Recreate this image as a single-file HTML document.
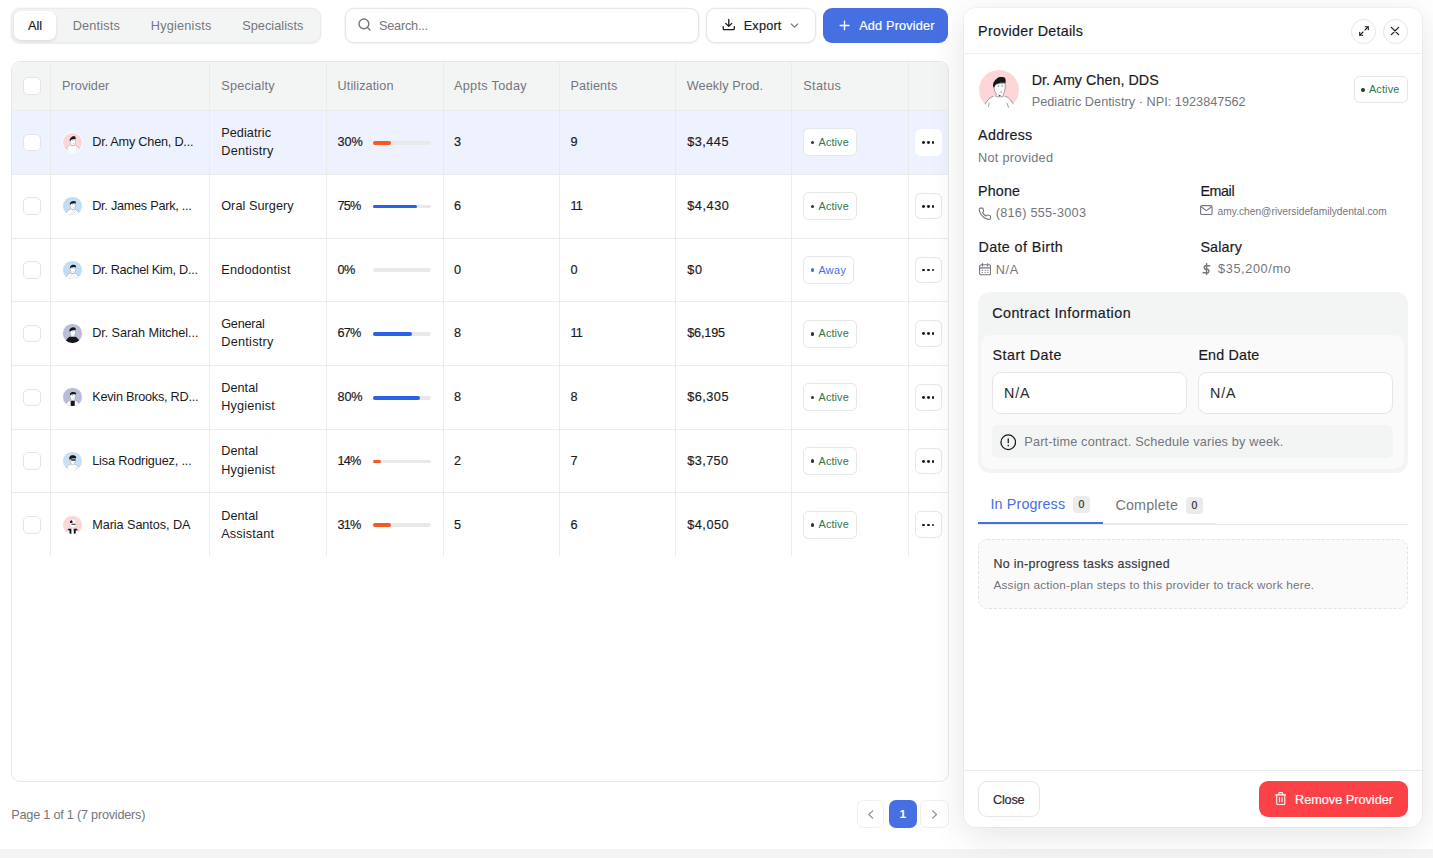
<!DOCTYPE html>
<html lang="en">
<head>
<meta charset="utf-8">
<title>Providers</title>
<style>
*{box-sizing:border-box;margin:0;padding:0}
html,body{width:1433px;height:858px;overflow:hidden;background:#fff}
body{font-family:"Liberation Sans",Arial,sans-serif;font-size:12.7px;color:#1b1b1f;position:relative}
.abs{position:absolute}
.t{line-height:1;white-space:pre}
.med{-webkit-text-stroke:0.18px currentColor}
</style>
</head>
<body>
<div class="abs" style="left:0.0px;top:849.4px;width:1433.0px;height:9.0px;background:#f4f4f5"></div>
<div class="abs" style="left:10.8px;top:7.7px;width:310.0px;height:35.0px;background:#f3f5f4;border:1px solid #ebebeb;border-radius:9px;box-shadow:0 1px 2px rgba(0,0,0,.05),0 0 0 1px rgba(0,0,0,.02);"></div>
<div class="abs" style="left:14.0px;top:11.3px;width:42.3px;height:28.8px;background:#fff;border-radius:7px;box-shadow:0 1px 3px rgba(0,0,0,.13)"></div>
<span class="abs t med" style="left:28.1px;top:19.9px;font-size:12.7px;color:#1b1b1f;letter-spacing:-0.124px">All</span>
<span class="abs t" style="left:72.7px;top:19.9px;font-size:12.7px;color:#75757d;letter-spacing:0.181px">Dentists</span>
<span class="abs t" style="left:150.8px;top:19.9px;font-size:12.7px;color:#75757d;letter-spacing:0.218px">Hygienists</span>
<span class="abs t" style="left:242.2px;top:19.9px;font-size:12.7px;color:#75757d;letter-spacing:0.061px">Specialists</span>
<div class="abs" style="left:345.2px;top:7.7px;width:353.6px;height:35.0px;background:#fff;border:1px solid #e6e6e6;border-radius:9px;box-shadow:0 1px 2px rgba(0,0,0,.05),0 0 0 1px rgba(0,0,0,.02);"></div>
<svg class="abs" style="left:357.5px;top:18.4px" width="13" height="13" viewBox="0 0 13 13" fill="none" stroke="#75757d" stroke-width="1.400" stroke-linecap="round"><circle cx="5.900" cy="5.900" r="4.900"/><path d="M9.500 9.500 12 12"/></svg>
<span class="abs t" style="left:378.9px;top:19.9px;font-size:12.7px;color:#75757d;letter-spacing:-0.186px">Search...</span>
<div class="abs" style="left:706.3px;top:7.7px;width:109.4px;height:35.0px;background:#fff;border:1px solid #e6e6e6;border-radius:9px;box-shadow:0 1px 2px rgba(0,0,0,.05),0 0 0 1px rgba(0,0,0,.02);"></div>
<svg class="abs" style="left:722.0px;top:18.3px" width="13.5" height="13.5" viewBox="0 0 13.500 13.500" fill="none" stroke="#1b1b1f" stroke-width="1.300" stroke-linecap="round" stroke-linejoin="round"><path d="M6.750 1.400v6.800M3.700 5.400 6.750 8.400 9.800 5.400M1.200 8.700v1.700c0 .7.500 1.200 1.200 1.200h8.700c.7 0 1.200-.5 1.200-1.200V8.700"/></svg>
<span class="abs t med" style="left:743.7px;top:19.9px;font-size:12.7px;color:#1b1b1f;letter-spacing:0.205px">Export</span>
<svg class="abs" style="left:789.9px;top:20.6px" width="9" height="9" viewBox="0 0 9 9" fill="none" stroke="#75757d" stroke-width="1.100" stroke-linecap="round" stroke-linejoin="round"><path d="M1.300 3 4.500 6.100 7.700 3"/></svg>
<div class="abs" style="left:823.2px;top:8.0px;width:125.3px;height:34.5px;background:#4670e2;border-radius:9px"></div>
<svg class="abs" style="left:838.6px;top:19.9px" width="11" height="11" viewBox="0 0 11 11" fill="none" stroke="#fff" stroke-width="1.400" stroke-linecap="round"><path d="M5.500 1.200v8.600M1.200 5.500h8.600"/></svg>
<span class="abs t med" style="left:859.2px;top:19.9px;font-size:12.7px;color:#fff;letter-spacing:0.179px">Add Provider</span>
<div class="abs" style="left:11px;top:60.5px;width:938px;height:721px;border:1px solid #e8e8e8;border-radius:9px;overflow:hidden;background:#fff">
<div class="abs" style="left:0.0px;top:0.0px;width:936.0px;height:48.8px;background:#f3f5f4"></div>
<div class="abs" style="left:0.0px;top:48.8px;width:936.0px;height:63.7px;background:#eef2fe"></div>
<div class="abs" style="left:0.0px;top:48.7px;width:936.0px;height:1.0px;background:#ebebeb"></div>
<div class="abs" style="left:0.0px;top:112.4px;width:936.0px;height:1.0px;background:#ebebeb"></div>
<div class="abs" style="left:0.0px;top:176.1px;width:936.0px;height:1.0px;background:#ebebeb"></div>
<div class="abs" style="left:0.0px;top:239.8px;width:936.0px;height:1.0px;background:#ebebeb"></div>
<div class="abs" style="left:0.0px;top:303.5px;width:936.0px;height:1.0px;background:#ebebeb"></div>
<div class="abs" style="left:0.0px;top:367.2px;width:936.0px;height:1.0px;background:#ebebeb"></div>
<div class="abs" style="left:0.0px;top:430.9px;width:936.0px;height:1.0px;background:#ebebeb"></div>
<div class="abs" style="left:38.3px;top:0.0px;width:1.0px;height:494.7px;background:#ebebeb"></div>
<div class="abs" style="left:197.3px;top:0.0px;width:1.0px;height:494.7px;background:#ebebeb"></div>
<div class="abs" style="left:314.3px;top:0.0px;width:1.0px;height:494.7px;background:#ebebeb"></div>
<div class="abs" style="left:430.5px;top:0.0px;width:1.0px;height:494.7px;background:#ebebeb"></div>
<div class="abs" style="left:546.9px;top:0.0px;width:1.0px;height:494.7px;background:#ebebeb"></div>
<div class="abs" style="left:663.2px;top:0.0px;width:1.0px;height:494.7px;background:#ebebeb"></div>
<div class="abs" style="left:779.4px;top:0.0px;width:1.0px;height:494.7px;background:#ebebeb"></div>
<div class="abs" style="left:896.4px;top:0.0px;width:1.0px;height:494.7px;background:#ebebeb"></div>
<div class="abs" style="left:11.0px;top:15.8px;width:17.6px;height:17.6px;border:1px solid #e4e4e7;border-radius:5px;background:#fff"></div>
<span class="abs t" style="left:50.0px;top:18.8px;font-size:12.7px;color:#75757d;letter-spacing:-0.007px">Provider</span>
<span class="abs t" style="left:209.2px;top:18.8px;font-size:12.7px;color:#75757d;letter-spacing:0.249px">Specialty</span>
<span class="abs t" style="left:325.6px;top:18.8px;font-size:12.7px;color:#75757d;letter-spacing:0.086px">Utilization</span>
<span class="abs t" style="left:441.9px;top:18.8px;font-size:12.7px;color:#75757d;letter-spacing:0.323px">Appts Today</span>
<span class="abs t" style="left:558.5px;top:18.8px;font-size:12.7px;color:#75757d;letter-spacing:0.141px">Patients</span>
<span class="abs t" style="left:674.7px;top:18.8px;font-size:12.7px;color:#75757d;letter-spacing:0.103px">Weekly Prod.</span>
<span class="abs t" style="left:791.3px;top:18.8px;font-size:12.7px;color:#75757d;letter-spacing:0.333px">Status</span>
<div class="abs" style="left:11.0px;top:72.2px;width:17.6px;height:17.6px;border:1px solid #e4e4e7;border-radius:5px;background:#fff"></div>
<div class="abs" style="left:50.3px;top:70.8px;width:20.400px;height:20.400px;border-radius:50%;border:.6px solid #fff;background:#fdd6da;overflow:hidden"><svg class="abs" style="left:0;top:0" width="19.200" height="19.200" viewBox="0 0 40 40"><path d="M0 40V37L5.500 35C8 30 11 26.800 14.500 26H25.500C29 26.800 32 30 34.500 35L40 37V40z" fill="#fff"/><path d="M5.500 35C8 30 11 26.800 14.500 26M25.500 26C29 26.800 32 30 34.500 35" fill="none" stroke="#555" stroke-width=".55"/><path d="M10 32.500 9.300 37.500M27.600 32.500 29.600 38" fill="none" stroke="#666" stroke-width=".6"/><path d="M14.900 14C14.800 18 15.300 21.500 17 23.600V26.500H24V24C25.800 21.500 26.300 17 25.900 13z" fill="#fff" stroke="#444" stroke-width=".45"/><path d="M18.600 15.900h1.500M22.200 15.700h1.400M21.300 21.800h1.300" fill="none" stroke="#333" stroke-width=".7"/><path d="M19 24.300 21.800 25.600 20.500 26.300z" fill="#222"/><path d="M14.800 17.500C12.800 15 14 10.800 19.300 7.200 22 6.500 25 6.900 25.800 7.600 26.600 9.500 26.600 11.500 26.100 13.200 23 12.200 19.500 12.800 17 14.200 16 15.300 15.300 16.500 14.800 17.500z" fill="#18181a"/></svg></div>
<span class="abs t" style="left:80.2px;top:74.6px;font-size:12.7px;color:#1b1b1f;letter-spacing:-0.221px">Dr. Amy Chen, D...</span>
<span class="abs t" style="left:209.2px;top:65.4px;font-size:12.7px;color:#1b1b1f;letter-spacing:0.062px">Pediatric</span>
<span class="abs t" style="left:209.2px;top:83.8px;font-size:12.7px;color:#1b1b1f;letter-spacing:0.275px">Dentistry</span>
<span class="abs t med" style="left:325.5px;top:74.6px;font-size:12.7px;color:#1b1b1f;letter-spacing:-0.003px">30%</span>
<div class="abs" style="left:361.0px;top:79.4px;width:58.3px;height:3.8px;background:#e9e9e9;border-radius:2px"></div>
<div class="abs" style="left:361.0px;top:79.4px;width:17.7px;height:3.8px;background:#f55a24;border-radius:2px"></div>
<span class="abs t med" style="left:441.9px;top:74.6px;font-size:12.7px;color:#1b1b1f;letter-spacing:0.138px">3</span>
<span class="abs t med" style="left:558.5px;top:74.6px;font-size:12.7px;color:#1b1b1f;letter-spacing:0.138px">9</span>
<span class="abs t med" style="left:675.2px;top:74.6px;font-size:12.7px;color:#1b1b1f;letter-spacing:0.489px">$3,445</span>
<div class="abs" style="left:790.9px;top:66.9px;width:53.8px;height:28.0px;border:1px solid #e6e6e6;border-radius:5.500px;background:#fff"></div>
<div class="abs" style="left:798.6px;top:79.3px;width:3.6px;height:3.6px;background:#1f3d2c;border-radius:50%"></div>
<span class="abs t" style="left:806.5px;top:75.7px;font-size:10.9px;color:#2f774b;letter-spacing:0.114px">Active</span>
<div class="abs" style="left:903.0px;top:67.7px;width:26.6px;height:26.6px;border:1px solid #fff;border-radius:5.500px;background:#fff"></div>
<div class="abs" style="left:910.2px;top:79.8px;width:2.9px;height:2.9px;background:#1b1b1f;border-radius:50%"></div>
<div class="abs" style="left:914.9px;top:79.8px;width:2.9px;height:2.9px;background:#1b1b1f;border-radius:50%"></div>
<div class="abs" style="left:919.6px;top:79.8px;width:2.9px;height:2.9px;background:#1b1b1f;border-radius:50%"></div>
<div class="abs" style="left:11.0px;top:135.9px;width:17.6px;height:17.6px;border:1px solid #e4e4e7;border-radius:5px;background:#fff"></div>
<div class="abs" style="left:50.3px;top:134.4px;width:20.400px;height:20.400px;border-radius:50%;border:.6px solid #fff;background:#c3dcf4;overflow:hidden"><svg class="abs" style="left:0;top:0" width="19.200" height="19.200" viewBox="0 0 40 40"><path d="M0 40V37L5.500 35C8 30 11 26.800 14.500 26H25.500C29 26.800 32 30 34.500 35L40 37V40z" fill="#fff"/><path d="M5.500 35C8 30 11 26.800 14.500 26M25.500 26C29 26.800 32 30 34.500 35" fill="none" stroke="#555" stroke-width=".55"/><path d="M14.900 14C14.800 18 15.300 21.500 17 23.600V26.500H24V24C25.800 21.500 26.300 17 25.900 13z" fill="#fff" stroke="#444" stroke-width=".45"/><path d="M18.600 15.900h1.500M22.200 15.700h1.400M21.300 21.800h1.300" fill="none" stroke="#333" stroke-width=".7"/><path d="M19 24.300 21.800 25.600 20.500 26.300z" fill="#222"/><path d="M15 16.800C13.300 14.500 14.500 11.500 17.500 9.300 20.500 7.600 24.500 7.800 26.800 10 27.300 11.500 26.800 12.800 26.200 13.600 23 12.300 19.500 12.900 17 14.300 16 15.200 15.400 16 15 16.800z" fill="#18181a"/><path d="M14 37 24.500 28M17 39 26 30.500" fill="none" stroke="#999" stroke-width=".7"/></svg></div>
<span class="abs t" style="left:80.2px;top:138.3px;font-size:12.7px;color:#1b1b1f;letter-spacing:-0.262px">Dr. James Park, ...</span>
<span class="abs t" style="left:209.2px;top:138.3px;font-size:12.7px;color:#1b1b1f;letter-spacing:0.050px">Oral Surgery</span>
<span class="abs t med" style="left:325.5px;top:138.3px;font-size:12.7px;color:#1b1b1f;letter-spacing:-0.750px">75%</span>
<div class="abs" style="left:361.0px;top:143.1px;width:58.3px;height:3.8px;background:#e9e9e9;border-radius:2px"></div>
<div class="abs" style="left:361.0px;top:143.1px;width:43.9px;height:3.8px;background:#2962e8;border-radius:2px"></div>
<span class="abs t med" style="left:441.9px;top:138.3px;font-size:12.7px;color:#1b1b1f;letter-spacing:0.138px">6</span>
<span class="abs t med" style="left:558.5px;top:138.3px;font-size:12.7px;color:#1b1b1f;letter-spacing:-0.750px">11</span>
<span class="abs t med" style="left:675.2px;top:138.3px;font-size:12.7px;color:#1b1b1f;letter-spacing:0.561px">$4,430</span>
<div class="abs" style="left:790.9px;top:130.6px;width:53.8px;height:28.0px;border:1px solid #e6e6e6;border-radius:5.500px;background:#fff"></div>
<div class="abs" style="left:798.6px;top:143.0px;width:3.6px;height:3.6px;background:#1f3d2c;border-radius:50%"></div>
<span class="abs t" style="left:806.5px;top:139.4px;font-size:10.9px;color:#2f774b;letter-spacing:0.114px">Active</span>
<div class="abs" style="left:903.0px;top:131.3px;width:26.6px;height:26.6px;border:1px solid #e6e6e6;border-radius:5.500px;background:#fff"></div>
<div class="abs" style="left:910.2px;top:143.4px;width:2.9px;height:2.9px;background:#1b1b1f;border-radius:50%"></div>
<div class="abs" style="left:914.9px;top:143.4px;width:2.9px;height:2.9px;background:#1b1b1f;border-radius:50%"></div>
<div class="abs" style="left:919.6px;top:143.4px;width:2.9px;height:2.9px;background:#1b1b1f;border-radius:50%"></div>
<div class="abs" style="left:11.0px;top:199.6px;width:17.6px;height:17.6px;border:1px solid #e4e4e7;border-radius:5px;background:#fff"></div>
<div class="abs" style="left:50.3px;top:198.1px;width:20.400px;height:20.400px;border-radius:50%;border:.6px solid #fff;background:#c3dcf4;overflow:hidden"><svg class="abs" style="left:0;top:0" width="19.200" height="19.200" viewBox="0 0 40 40"><path d="M0 40V37L5.500 35C8 30 11 26.800 14.500 26H25.500C29 26.800 32 30 34.500 35L40 37V40z" fill="#fff"/><path d="M5.500 35C8 30 11 26.800 14.500 26M25.500 26C29 26.800 32 30 34.500 35" fill="none" stroke="#555" stroke-width=".55"/><path d="M14.900 14C14.800 18 15.300 21.500 17 23.600V26.500H24V24C25.800 21.500 26.300 17 25.900 13z" fill="#fff" stroke="#444" stroke-width=".45"/><path d="M18.600 15.900h1.500M22.200 15.700h1.400M21.300 21.800h1.300" fill="none" stroke="#333" stroke-width=".7"/><path d="M19 24.300 21.800 25.600 20.500 26.300z" fill="#222"/><path d="M15 15.800C13.800 13 15.500 9.800 18.500 8.300 21.500 7.200 25 7.900 27 10 27.400 11.500 27 12.800 26.300 13.600 23 12.100 19.500 12.500 17 13.800 16 14.500 15.400 15.200 15 15.800z" fill="#18181a"/><path d="M12 31l2 2M17 29l2 2M22 30l2 2M14 35l2 2M20 34l2 2M26 33l2 2" fill="none" stroke="#777" stroke-width=".7"/></svg></div>
<span class="abs t" style="left:80.2px;top:202.0px;font-size:12.7px;color:#1b1b1f;letter-spacing:-0.298px">Dr. Rachel Kim, D...</span>
<span class="abs t" style="left:209.2px;top:202.0px;font-size:12.7px;color:#1b1b1f;letter-spacing:0.227px">Endodontist</span>
<span class="abs t med" style="left:325.5px;top:202.0px;font-size:12.7px;color:#1b1b1f;letter-spacing:-0.629px">0%</span>
<div class="abs" style="left:361.0px;top:206.9px;width:58.3px;height:3.8px;background:#e9e9e9;border-radius:2px"></div>
<span class="abs t med" style="left:441.9px;top:202.0px;font-size:12.7px;color:#1b1b1f;letter-spacing:0.138px">0</span>
<span class="abs t med" style="left:558.5px;top:202.0px;font-size:12.7px;color:#1b1b1f;letter-spacing:0.138px">0</span>
<span class="abs t med" style="left:675.2px;top:202.0px;font-size:12.7px;color:#1b1b1f;letter-spacing:0.650px">$0</span>
<div class="abs" style="left:790.9px;top:194.3px;width:50.8px;height:28.0px;border:1px solid #e6e6e6;border-radius:5.500px;background:#fff"></div>
<div class="abs" style="left:798.6px;top:206.8px;width:3.6px;height:3.6px;background:#4670e2;border-radius:50%"></div>
<span class="abs t" style="left:806.5px;top:203.1px;font-size:10.9px;color:#4670e2;letter-spacing:0.304px">Away</span>
<div class="abs" style="left:903.0px;top:195.1px;width:26.6px;height:26.6px;border:1px solid #e6e6e6;border-radius:5.500px;background:#fff"></div>
<div class="abs" style="left:910.2px;top:207.1px;width:2.9px;height:2.9px;background:#1b1b1f;border-radius:50%"></div>
<div class="abs" style="left:914.9px;top:207.1px;width:2.9px;height:2.9px;background:#1b1b1f;border-radius:50%"></div>
<div class="abs" style="left:919.6px;top:207.1px;width:2.9px;height:2.9px;background:#1b1b1f;border-radius:50%"></div>
<div class="abs" style="left:11.0px;top:263.4px;width:17.6px;height:17.6px;border:1px solid #e4e4e7;border-radius:5px;background:#fff"></div>
<div class="abs" style="left:50.3px;top:261.9px;width:20.400px;height:20.400px;border-radius:50%;border:.6px solid #fff;background:#babdd7;overflow:hidden"><svg class="abs" style="left:0;top:0" width="19.200" height="19.200" viewBox="0 0 40 40"><path d="M0 40V38L6.500 35C8.500 30.500 11 27.500 14.500 26.500H25.500C29 27.500 31.500 30.500 33.500 35L40 38V40z" fill="#16161a"/><path d="M14.900 14C14.800 18 15.300 21.500 17 23.600V26.500H24V24C25.800 21.500 26.300 17 25.900 13z" fill="#fff" stroke="#444" stroke-width=".45"/><path d="M18.600 15.900h1.500M22.200 15.700h1.400M21.300 21.800h1.300" fill="none" stroke="#333" stroke-width=".7"/><path d="M19 24.300 21.800 25.600 20.500 26.300z" fill="#222"/><path d="M14.500 16C12.200 14 13 10.500 16.500 8.300 19.500 6.200 24 6.300 26 8.500 26.800 10.500 26.500 12.200 26 13.200 23 12.200 19.500 12.800 17 14.200 15.800 14.800 15 15.400 14.500 16z" fill="#16161a"/></svg></div>
<span class="abs t" style="left:80.2px;top:265.7px;font-size:12.7px;color:#1b1b1f;letter-spacing:-0.087px">Dr. Sarah Mitchel...</span>
<span class="abs t" style="left:209.2px;top:256.5px;font-size:12.7px;color:#1b1b1f;letter-spacing:-0.237px">General</span>
<span class="abs t" style="left:209.2px;top:274.9px;font-size:12.7px;color:#1b1b1f;letter-spacing:0.275px">Dentistry</span>
<span class="abs t med" style="left:325.5px;top:265.7px;font-size:12.7px;color:#1b1b1f;letter-spacing:-0.750px">67%</span>
<div class="abs" style="left:361.0px;top:270.6px;width:58.3px;height:3.8px;background:#e9e9e9;border-radius:2px"></div>
<div class="abs" style="left:361.0px;top:270.6px;width:39.3px;height:3.8px;background:#2962e8;border-radius:2px"></div>
<span class="abs t med" style="left:441.9px;top:265.7px;font-size:12.7px;color:#1b1b1f;letter-spacing:0.138px">8</span>
<span class="abs t med" style="left:558.5px;top:265.7px;font-size:12.7px;color:#1b1b1f;letter-spacing:-0.750px">11</span>
<span class="abs t med" style="left:675.2px;top:265.7px;font-size:12.7px;color:#1b1b1f;letter-spacing:-0.166px">$6,195</span>
<div class="abs" style="left:790.9px;top:258.1px;width:53.8px;height:28.0px;border:1px solid #e6e6e6;border-radius:5.500px;background:#fff"></div>
<div class="abs" style="left:798.6px;top:270.5px;width:3.6px;height:3.6px;background:#1f3d2c;border-radius:50%"></div>
<span class="abs t" style="left:806.5px;top:266.8px;font-size:10.9px;color:#2f774b;letter-spacing:0.114px">Active</span>
<div class="abs" style="left:903.0px;top:258.8px;width:26.6px;height:26.6px;border:1px solid #e6e6e6;border-radius:5.500px;background:#fff"></div>
<div class="abs" style="left:910.2px;top:270.9px;width:2.9px;height:2.9px;background:#1b1b1f;border-radius:50%"></div>
<div class="abs" style="left:914.9px;top:270.9px;width:2.9px;height:2.9px;background:#1b1b1f;border-radius:50%"></div>
<div class="abs" style="left:919.6px;top:270.9px;width:2.9px;height:2.9px;background:#1b1b1f;border-radius:50%"></div>
<div class="abs" style="left:11.0px;top:327.1px;width:17.6px;height:17.6px;border:1px solid #e4e4e7;border-radius:5px;background:#fff"></div>
<div class="abs" style="left:50.3px;top:325.6px;width:20.400px;height:20.400px;border-radius:50%;border:.6px solid #fff;background:#babdd7;overflow:hidden"><svg class="abs" style="left:0;top:0" width="19.200" height="19.200" viewBox="0 0 40 40"><path d="M0 40V37L5.500 35C8 30 11 26.800 14.500 26H25.500C29 26.800 32 30 34.500 35L40 37V40z" fill="#fff"/><path d="M5.500 35C8 30 11 26.800 14.500 26M25.500 26C29 26.800 32 30 34.500 35" fill="none" stroke="#555" stroke-width=".55"/><path d="M16 26.500H24.500V40H16z" fill="#16161a"/><path d="M14.900 14C14.800 18 15.300 21.500 17 23.600V26.500H24V24C25.800 21.500 26.300 17 25.900 13z" fill="#fff" stroke="#444" stroke-width=".45"/><path d="M18.600 15.900h1.500M22.200 15.700h1.400M21.300 21.800h1.300" fill="none" stroke="#333" stroke-width=".7"/><path d="M19 24.300 21.800 25.600 20.500 26.300z" fill="#222"/><path d="M15 15.500C13.500 13 15 10 18 8.900 21.500 7.800 25.500 8.300 27.500 10.300 27.800 11.800 27.300 13 26.500 13.600 23 12.300 19.500 12.600 17 13.800 16 14.300 15.400 14.900 15 15.500z" fill="#16161a"/></svg></div>
<span class="abs t" style="left:80.2px;top:329.4px;font-size:12.7px;color:#1b1b1f;letter-spacing:-0.243px">Kevin Brooks, RD...</span>
<span class="abs t" style="left:209.2px;top:320.2px;font-size:12.7px;color:#1b1b1f;letter-spacing:0.039px">Dental</span>
<span class="abs t" style="left:209.2px;top:338.6px;font-size:12.7px;color:#1b1b1f;letter-spacing:0.166px">Hygienist</span>
<span class="abs t med" style="left:325.5px;top:329.4px;font-size:12.7px;color:#1b1b1f;letter-spacing:-0.122px">80%</span>
<div class="abs" style="left:361.0px;top:334.3px;width:58.3px;height:3.8px;background:#e9e9e9;border-radius:2px"></div>
<div class="abs" style="left:361.0px;top:334.3px;width:46.8px;height:3.8px;background:#2962e8;border-radius:2px"></div>
<span class="abs t med" style="left:441.9px;top:329.4px;font-size:12.7px;color:#1b1b1f;letter-spacing:0.138px">8</span>
<span class="abs t med" style="left:558.5px;top:329.4px;font-size:12.7px;color:#1b1b1f;letter-spacing:0.138px">8</span>
<span class="abs t med" style="left:675.2px;top:329.4px;font-size:12.7px;color:#1b1b1f;letter-spacing:0.489px">$6,305</span>
<div class="abs" style="left:790.9px;top:321.8px;width:53.8px;height:28.0px;border:1px solid #e6e6e6;border-radius:5.500px;background:#fff"></div>
<div class="abs" style="left:798.6px;top:334.2px;width:3.6px;height:3.6px;background:#1f3d2c;border-radius:50%"></div>
<span class="abs t" style="left:806.5px;top:330.5px;font-size:10.9px;color:#2f774b;letter-spacing:0.114px">Active</span>
<div class="abs" style="left:903.0px;top:322.5px;width:26.6px;height:26.6px;border:1px solid #e6e6e6;border-radius:5.500px;background:#fff"></div>
<div class="abs" style="left:910.2px;top:334.6px;width:2.9px;height:2.9px;background:#1b1b1f;border-radius:50%"></div>
<div class="abs" style="left:914.9px;top:334.6px;width:2.9px;height:2.9px;background:#1b1b1f;border-radius:50%"></div>
<div class="abs" style="left:919.6px;top:334.6px;width:2.9px;height:2.9px;background:#1b1b1f;border-radius:50%"></div>
<div class="abs" style="left:11.0px;top:390.8px;width:17.6px;height:17.6px;border:1px solid #e4e4e7;border-radius:5px;background:#fff"></div>
<div class="abs" style="left:50.3px;top:389.2px;width:20.400px;height:20.400px;border-radius:50%;border:.6px solid #fff;background:#c9e0f7;overflow:hidden"><svg class="abs" style="left:0;top:0" width="19.200" height="19.200" viewBox="0 0 40 40"><path d="M0 40V37L5.500 35C8 30 11 26.800 14.500 26H25.500C29 26.800 32 30 34.500 35L40 37V40z" fill="#fff"/><path d="M5.500 35C8 30 11 26.800 14.500 26M25.500 26C29 26.800 32 30 34.500 35" fill="none" stroke="#555" stroke-width=".55"/><path d="M10 32.500 9.300 37.500M27.600 32.500 29.600 38" fill="none" stroke="#666" stroke-width=".6"/><path d="M14.900 14C14.800 18 15.300 21.500 17 23.600V26.500H24V24C25.800 21.500 26.300 17 25.900 13z" fill="#fff" stroke="#444" stroke-width=".45"/><path d="M17 15.200H26V18.300H17z" fill="#1c2333"/><path d="M21.300 21.800h1.300" stroke="#333" stroke-width=".7"/><path d="M14.500 16.500C11.800 14 12.800 9.500 16.500 7.500 20 5.800 24.500 6.300 26.800 9 27.800 11 27.300 12.800 26.500 13.800 23.500 12.800 20 13 17.500 14 16 14.800 15 15.600 14.500 16.500z" fill="#16161a"/></svg></div>
<span class="abs t" style="left:80.2px;top:393.1px;font-size:12.7px;color:#1b1b1f;letter-spacing:-0.149px">Lisa Rodriguez, ...</span>
<span class="abs t" style="left:209.2px;top:383.9px;font-size:12.7px;color:#1b1b1f;letter-spacing:0.039px">Dental</span>
<span class="abs t" style="left:209.2px;top:402.3px;font-size:12.7px;color:#1b1b1f;letter-spacing:0.166px">Hygienist</span>
<span class="abs t med" style="left:325.5px;top:393.1px;font-size:12.7px;color:#1b1b1f;letter-spacing:-0.750px">14%</span>
<div class="abs" style="left:361.0px;top:398.0px;width:58.3px;height:3.8px;background:#e9e9e9;border-radius:2px"></div>
<div class="abs" style="left:361.0px;top:398.0px;width:8.4px;height:3.8px;background:#f55a24;border-radius:2px"></div>
<span class="abs t med" style="left:441.9px;top:393.1px;font-size:12.7px;color:#1b1b1f;letter-spacing:0.138px">2</span>
<span class="abs t med" style="left:558.5px;top:393.1px;font-size:12.7px;color:#1b1b1f;letter-spacing:0.138px">7</span>
<span class="abs t med" style="left:675.2px;top:393.1px;font-size:12.7px;color:#1b1b1f;letter-spacing:0.434px">$3,750</span>
<div class="abs" style="left:790.9px;top:385.5px;width:53.8px;height:28.0px;border:1px solid #e6e6e6;border-radius:5.500px;background:#fff"></div>
<div class="abs" style="left:798.6px;top:397.9px;width:3.6px;height:3.6px;background:#1f3d2c;border-radius:50%"></div>
<span class="abs t" style="left:806.5px;top:394.2px;font-size:10.9px;color:#2f774b;letter-spacing:0.114px">Active</span>
<div class="abs" style="left:903.0px;top:386.2px;width:26.6px;height:26.6px;border:1px solid #e6e6e6;border-radius:5.500px;background:#fff"></div>
<div class="abs" style="left:910.2px;top:398.2px;width:2.9px;height:2.9px;background:#1b1b1f;border-radius:50%"></div>
<div class="abs" style="left:914.9px;top:398.2px;width:2.9px;height:2.9px;background:#1b1b1f;border-radius:50%"></div>
<div class="abs" style="left:919.6px;top:398.2px;width:2.9px;height:2.9px;background:#1b1b1f;border-radius:50%"></div>
<div class="abs" style="left:11.0px;top:454.5px;width:17.6px;height:17.6px;border:1px solid #e4e4e7;border-radius:5px;background:#fff"></div>
<div class="abs" style="left:50.3px;top:453.0px;width:20.400px;height:20.400px;border-radius:50%;border:.6px solid #fff;background:#fdd6da;overflow:hidden"><svg class="abs" style="left:0;top:0" width="19.200" height="19.200" viewBox="0 0 40 40"><path d="M0 40V37L5.500 35C8 30 11 26.800 14.500 26H25.500C29 26.800 32 30 34.500 35L40 37V40z" fill="#fff"/><path d="M5.500 35C8 30 11 26.800 14.500 26M25.500 26C29 26.800 32 30 34.500 35" fill="none" stroke="#555" stroke-width=".55"/><path d="M14.500 8.500C17 6.300 23 6.300 25.800 8.500 26.800 12 26.500 18 25.500 22 23.500 25 18 25 15.800 22 14.500 18 14 12 14.500 8.500z" fill="#fff" stroke="#bbb" stroke-width=".4"/><path d="M14.500 14C14 11.500 15.500 9.300 17.500 9 19 9.500 20.500 11.500 20 13.500 18.500 15 16 15.300 14.500 14z" fill="#16161a"/><path d="M17.500 16H26V18.200H17.500z" fill="#1c2333"/><path d="M11.500 26.500H17.500V40H13.500V30L9.500 29.500zM22 26.500H28.500L31 29.500 26.500 30V40H23z" fill="#16161a"/></svg></div>
<span class="abs t" style="left:80.2px;top:457.7px;font-size:12.7px;color:#1b1b1f;letter-spacing:-0.073px">Maria Santos, DA</span>
<span class="abs t" style="left:209.2px;top:448.5px;font-size:12.7px;color:#1b1b1f;letter-spacing:0.039px">Dental</span>
<span class="abs t" style="left:209.2px;top:466.9px;font-size:12.7px;color:#1b1b1f;letter-spacing:0.167px">Assistant</span>
<span class="abs t med" style="left:325.5px;top:457.7px;font-size:12.7px;color:#1b1b1f;letter-spacing:-0.750px">31%</span>
<div class="abs" style="left:361.0px;top:461.7px;width:58.3px;height:3.8px;background:#e9e9e9;border-radius:2px"></div>
<div class="abs" style="left:361.0px;top:461.7px;width:18.3px;height:3.8px;background:#f55a24;border-radius:2px"></div>
<span class="abs t med" style="left:441.9px;top:457.7px;font-size:12.7px;color:#1b1b1f;letter-spacing:0.138px">5</span>
<span class="abs t med" style="left:558.5px;top:457.7px;font-size:12.7px;color:#1b1b1f;letter-spacing:0.138px">6</span>
<span class="abs t med" style="left:675.2px;top:457.7px;font-size:12.7px;color:#1b1b1f;letter-spacing:0.525px">$4,050</span>
<div class="abs" style="left:790.9px;top:449.2px;width:53.8px;height:28.0px;border:1px solid #e6e6e6;border-radius:5.500px;background:#fff"></div>
<div class="abs" style="left:798.6px;top:461.6px;width:3.6px;height:3.6px;background:#1f3d2c;border-radius:50%"></div>
<span class="abs t" style="left:806.5px;top:457.9px;font-size:10.9px;color:#2f774b;letter-spacing:0.114px">Active</span>
<div class="abs" style="left:903.0px;top:449.9px;width:26.6px;height:26.6px;border:1px solid #e6e6e6;border-radius:5.500px;background:#fff"></div>
<div class="abs" style="left:910.2px;top:462.0px;width:2.9px;height:2.9px;background:#1b1b1f;border-radius:50%"></div>
<div class="abs" style="left:914.9px;top:462.0px;width:2.9px;height:2.9px;background:#1b1b1f;border-radius:50%"></div>
<div class="abs" style="left:919.6px;top:462.0px;width:2.9px;height:2.9px;background:#1b1b1f;border-radius:50%"></div>
</div>
<span class="abs t" style="left:11.3px;top:808.6px;font-size:12.7px;color:#75757d;letter-spacing:-0.230px">Page 1 of 1 (7 providers)</span>
<div class="abs" style="left:857.1px;top:800.0px;width:27.4px;height:27.9px;border:1px solid #efefef;border-radius:6.500px;background:#fff"></div>
<svg class="abs" style="left:866.0px;top:809.5px" width="9" height="9" viewBox="0 0 9 9" fill="none" stroke="#8a8a92" stroke-width="1.100" stroke-linecap="round" stroke-linejoin="round"><path d="M6.700 .9 2.800 4.500 6.700 8.100"/></svg>
<div class="abs" style="left:888.5px;top:799.8px;width:28.4px;height:28.2px;border-radius:7px;background:#4670e2"></div>
<span class="abs t" style="left:899.6px;top:808.5px;font-size:11.8px;color:#fff;letter-spacing:-0.750px;font-weight:700">1</span>
<div class="abs" style="left:920.4px;top:800.0px;width:28.2px;height:27.9px;border:1px solid #efefef;border-radius:6.500px;background:#fff"></div>
<svg class="abs" style="left:929.8px;top:809.5px" width="9" height="9" viewBox="0 0 9 9" fill="none" stroke="#8a8a92" stroke-width="1.100" stroke-linecap="round" stroke-linejoin="round"><path d="M2.600 .9 6.500 4.500 2.600 8.100"/></svg>
<div class="abs" style="left:964px;top:8.3px;width:458px;height:818.600px;background:#fff;border-radius:12px;box-shadow:0 8px 36px rgba(0,0,0,.11),0 0 0 1px rgba(0,0,0,.03)">
<span class="abs t med" style="left:14.1px;top:15.8px;font-size:14.3px;color:#1b1b1f;letter-spacing:0.263px">Provider Details</span>
<div class="abs" style="left:0.0px;top:45.0px;width:458.0px;height:1.2px;background:#eeeeee"></div>
<div class="abs" style="left:387.3px;top:10.6px;width:24.800px;height:24.800px;border:1px solid #e6e6e6;border-radius:50%"><svg class="abs" style="left:5.400px;top:5.400px" width="12" height="12" viewBox="0 0 12 12" fill="none" stroke="#1b1b1f" stroke-width="1.100" stroke-linecap="round" stroke-linejoin="round"><path d="M7.200 1.700h3.100v3.100M10.300 1.700 7 5M4.800 10.300H1.700V7.200M1.700 10.300 5 7"/></svg></div>
<div class="abs" style="left:419.1px;top:10.6px;width:24.800px;height:24.800px;border:1px solid #e6e6e6;border-radius:50%"><svg class="abs" style="left:5.400px;top:5.400px" width="12" height="12" viewBox="0 0 12 12" fill="none" stroke="#1b1b1f" stroke-width="1.300" stroke-linecap="round"><path d="M2.400 2.400l7.200 7.200M9.600 2.400l-7.200 7.200"/></svg></div>
<div class="abs" style="left:14.9px;top:61.3px;width:40.400px;height:40.400px;border-radius:50%;background:#fdd6da;overflow:hidden"><svg class="abs" style="left:0;top:0" width="40.400" height="40.400" viewBox="0 0 40 40"><path d="M0 40V37L5.500 35C8 30 11 26.800 14.500 26H25.500C29 26.800 32 30 34.500 35L40 37V40z" fill="#fff"/><path d="M5.500 35C8 30 11 26.800 14.500 26M25.500 26C29 26.800 32 30 34.500 35" fill="none" stroke="#555" stroke-width=".55"/><path d="M10 32.500 9.300 37.500M27.600 32.500 29.600 38" fill="none" stroke="#666" stroke-width=".6"/><path d="M14.900 14C14.800 18 15.300 21.500 17 23.600V26.500H24V24C25.800 21.500 26.300 17 25.900 13z" fill="#fff" stroke="#444" stroke-width=".45"/><path d="M18.600 15.900h1.500M22.200 15.700h1.400M21.300 21.800h1.300" fill="none" stroke="#333" stroke-width=".7"/><path d="M19 24.300 21.800 25.600 20.500 26.300z" fill="#222"/><path d="M14.800 17.500C12.800 15 14 10.800 19.300 7.200 22 6.500 25 6.900 25.800 7.600 26.600 9.500 26.600 11.500 26.100 13.200 23 12.200 19.500 12.800 17 14.200 16 15.300 15.300 16.500 14.800 17.500z" fill="#18181a"/></svg></div>
<span class="abs t med" style="left:67.7px;top:64.4px;font-size:14.3px;color:#1b1b1f;letter-spacing:0.041px">Dr. Amy Chen, DDS</span>
<span class="abs t" style="left:67.7px;top:87.9px;font-size:12.7px;color:#75757d;letter-spacing:0.028px">Pediatric Dentistry · NPI: 1923847562</span>
<div class="abs" style="left:390.1px;top:67.4px;width:53.6px;height:27.8px;border:1px solid #e6e6e6;border-radius:5.500px"></div>
<div class="abs" style="left:397.1px;top:79.6px;width:3.8px;height:3.8px;background:#1f3d2c;border-radius:50%"></div>
<span class="abs t" style="left:404.9px;top:76.2px;font-size:10.9px;color:#2f774b;letter-spacing:0.151px">Active</span>
<span class="abs t med" style="left:14.1px;top:119.9px;font-size:14.3px;color:#1b1b1f;letter-spacing:0.284px">Address</span>
<span class="abs t" style="left:14.1px;top:143.6px;font-size:12.7px;color:#75757d;letter-spacing:0.266px">Not provided</span>
<span class="abs t med" style="left:14.1px;top:175.8px;font-size:14.3px;color:#1b1b1f;letter-spacing:0.146px">Phone</span>
<svg class="abs" style="left:14.0px;top:198.7px" width="13.6" height="13.6" viewBox="0 0 24 24" fill="none" stroke="#75757d" stroke-width="1.900" stroke-linecap="round" stroke-linejoin="round"><path d="M22 16.920v3a2 2 0 0 1-2.180 2 19.790 19.790 0 0 1-8.630-3.070 19.500 19.500 0 0 1-6-6 19.790 19.790 0 0 1-3.070-8.670A2 2 0 0 1 4.110 2h3a2 2 0 0 1 2 1.720 12.840 12.840 0 0 0 .7 2.810 2 2 0 0 1-.45 2.110L8.090 9.910a16 16 0 0 0 6 6l1.270-1.270a2 2 0 0 1 2.110-.45 12.840 12.840 0 0 0 2.810.7A2 2 0 0 1 22 16.920z"/></svg>
<span class="abs t" style="left:31.7px;top:199.0px;font-size:12.7px;color:#75757d;letter-spacing:0.269px">(816) 555-3003</span>
<span class="abs t med" style="left:236.4px;top:175.8px;font-size:14.3px;color:#1b1b1f;letter-spacing:-0.389px">Email</span>
<svg class="abs" style="left:236.4px;top:197.2px" width="12.7" height="10.1" viewBox="0 0 12.700 10.100" fill="none" stroke="#75757d" stroke-width="1.100" stroke-linejoin="round"><rect x=".6" y=".6" width="11.500" height="8.900" rx="1.300"/><path d="M.8 1.500 6.350 5.600 11.900 1.500"/></svg>
<span class="abs t" style="left:253.6px;top:198.3px;font-size:10.2px;color:#75757d;letter-spacing:0.015px">amy.chen@riversidefamilydental.com</span>
<span class="abs t med" style="left:14.4px;top:231.7px;font-size:14.3px;color:#1b1b1f;letter-spacing:0.410px">Date of Birth</span>
<svg class="abs" style="left:14.8px;top:254.9px" width="12.2" height="12.4" viewBox="0 0 12.200 12.400" fill="none" stroke="#75757d" stroke-width="1.100" stroke-linecap="round"><rect x=".6" y="1.800" width="11" height="10" rx="1.600"/><path d="M.6 4.900h11M3.500.6v2.400M8.700.6v2.400"/><path d="M3.300 7.300h.1M6.100 7.300h.1M8.900 7.300h.1M3.300 9.500h.1M6.100 9.500h.1M8.900 9.500h.1" stroke-width="1.200"/></svg>
<span class="abs t" style="left:31.7px;top:255.3px;font-size:12.7px;color:#75757d;letter-spacing:0.738px">N/A</span>
<span class="abs t med" style="left:236.4px;top:231.4px;font-size:14.3px;color:#1b1b1f;letter-spacing:0.176px">Salary</span>
<svg class="abs" style="left:238.4px;top:254.5px" width="9.1" height="12.6" viewBox="0 0 8.700 12.200" fill="none" stroke="#75757d" stroke-width="1.350" stroke-linecap="round" stroke-linejoin="round"><path d="M4.350.6v11M7.400 2.700H3a2 2 0 0 0 0 3.400h2.700a2 2 0 0 1 0 3.400H1"/></svg>
<span class="abs t" style="left:254.1px;top:254.6px;font-size:12.7px;color:#75757d;letter-spacing:0.619px">$35,200/mo</span>
<div class="abs" style="left:14.1px;top:283.7px;width:429.6px;height:181.0px;border-radius:12px;background:#f3f5f4"></div>
<div class="abs" style="left:17.1px;top:326.4px;width:423.0px;height:134.8px;border-radius:10px;background:#fafafa"></div>
<span class="abs t med" style="left:28.2px;top:297.7px;font-size:14.3px;color:#1b1b1f;letter-spacing:0.470px">Contract Information</span>
<span class="abs t med" style="left:28.6px;top:340.2px;font-size:14.3px;color:#1b1b1f;letter-spacing:0.487px">Start Date</span>
<span class="abs t med" style="left:234.4px;top:340.2px;font-size:14.3px;color:#1b1b1f;letter-spacing:0.183px">End Date</span>
<div class="abs" style="left:28.1px;top:363.9px;width:195.0px;height:41.8px;border:1px solid #e6e6e6;border-radius:9px;background:#fff"></div>
<div class="abs" style="left:234.0px;top:363.9px;width:195.3px;height:41.8px;border:1px solid #e6e6e6;border-radius:9px;background:#fff"></div>
<span class="abs t" style="left:40.0px;top:377.5px;font-size:14.3px;color:#2a2a2e;letter-spacing:0.863px">N/A</span>
<span class="abs t" style="left:246.0px;top:377.5px;font-size:14.3px;color:#2a2a2e;letter-spacing:0.863px">N/A</span>
<div class="abs" style="left:28.1px;top:416.8px;width:401.2px;height:33.2px;border-radius:6px;background:#f3f4f4"></div>
<svg class="abs" style="left:35.5px;top:426.0px" width="16.5" height="16.5" viewBox="0 0 16.500 16.500" fill="none" stroke="#1b1b1f" stroke-width="1.300" stroke-linecap="round"><circle cx="8.250" cy="8.250" r="7.300"/><path d="M8.250 4.800v3.900"/><path d="M8.250 11.500v.1" stroke-width="1.600"/></svg>
<span class="abs t" style="left:60.3px;top:427.4px;font-size:12.7px;color:#75757d;letter-spacing:0.183px">Part-time contract. Schedule varies by week.</span>
<span class="abs t" style="left:26.5px;top:489.0px;font-size:14.3px;color:#4670e2;letter-spacing:0.142px">In Progress</span>
<div class="abs" style="left:108.7px;top:487.7px;width:17.3px;height:17.0px;border-radius:4px;background:#ebebeb"></div>
<span class="abs t med" style="left:114.4px;top:491.1px;font-size:10.5px;color:#2a2a2e;letter-spacing:0.156px">0</span>
<span class="abs t" style="left:151.5px;top:489.9px;font-size:14.3px;color:#75757d;letter-spacing:0.173px">Complete</span>
<div class="abs" style="left:221.9px;top:488.7px;width:17.1px;height:17.0px;border-radius:4px;background:#ebebeb"></div>
<span class="abs t med" style="left:227.5px;top:492.1px;font-size:10.5px;color:#2a2a2e;letter-spacing:0.156px">0</span>
<div class="abs" style="left:14.0px;top:515.9px;width:429.7px;height:1.0px;background:#e9e9e9"></div>
<div class="abs" style="left:138.6px;top:514.7px;width:113.0px;height:1.0px;background:#ececec"></div>
<div class="abs" style="left:14.0px;top:513.5px;width:124.6px;height:2.4px;background:#4670e2"></div>
<div class="abs" style="left:14.3px;top:530.7px;width:429.4px;height:70.0px;border:1px dashed #e3e3e3;border-radius:9px;background:#fafafa"></div>
<span class="abs t med" style="left:29.4px;top:549.9px;font-size:12.4px;color:#3a3a40;letter-spacing:0.338px">No in-progress tasks assigned</span>
<span class="abs t" style="left:29.4px;top:571.5px;font-size:11.8px;color:#75757d;letter-spacing:0.195px">Assign action-plan steps to this provider to track work here.</span>
<div class="abs" style="left:0.0px;top:761.7px;width:458.0px;height:1.0px;background:#ebebeb"></div>
<div class="abs" style="left:14.1px;top:772.7px;width:61.5px;height:35.6px;border:1px solid #e6e6e6;border-radius:9px"></div>
<span class="abs t med" style="left:29.0px;top:785.8px;font-size:12.7px;color:#2a2a2e;letter-spacing:-0.208px">Close</span>
<div class="abs" style="left:295.0px;top:772.8px;width:148.8px;height:35.6px;border-radius:9px;background:#fc4246"></div>
<svg class="abs" style="left:310.5px;top:784.1px" width="11.5" height="13.1" viewBox="0 0 11.500 13.100" fill="none" stroke="#fff" stroke-width="1.100" stroke-linecap="round" stroke-linejoin="round"><path d="M.6 2.900h10.300M3.700 2.900V1.600c0-.6.400-1 1-1h2.100c.6 0 1 .4 1 1v1.300M1.700 2.900v8.600c0 .6.400 1 1 1h6.100c.6 0 1-.4 1-1V2.900M4.500 5.600v4.200M7 5.600v4.200"/></svg>
<span class="abs t med" style="left:331.0px;top:785.4px;font-size:12.7px;color:#fff;letter-spacing:-0.001px">Remove Provider</span>
</div>
</body>
</html>
